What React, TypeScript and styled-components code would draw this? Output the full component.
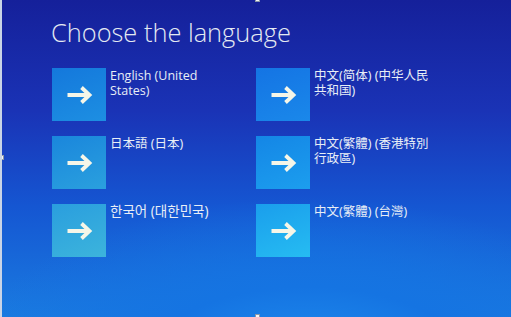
import React from "react";
import styled, { createGlobalStyle } from "styled-components";

const Global = createGlobalStyle`
  html, body { margin: 0; padding: 0; background: #1438b8; }
  #root { width: 511px; height: 317px; }
`;

const Screen = styled.div`
  position: relative;
  width: 511px;
  height: 317px;
  box-sizing: border-box;
  overflow: hidden;
  padding: 15px 0 0 50px;
  border-left: 2px solid #c9d4e6;
  background:
    radial-gradient(ellipse 90% 70% at 60% 115%, #1f8ff0 0%, #1574e2 35%, rgba(21,90,214,0) 75%),
    linear-gradient(180deg, #15209a 0%, #1a33b6 35%, #1556d2 65%, #1a7be0 100%);
  font-family: "Open Sans", "Noto Sans", sans-serif;
  color: #e6ecf4;
`;

const Title = styled.h1`
  margin: 0 0 19px -1px;
  font-family: "Open Sans", "Noto Sans", sans-serif;
  font-weight: 300;
  font-size: 25.4px;
  line-height: 34px;
  color: #e4eaf2;
`;

const Grid = styled.div`
  display: grid;
  grid-template-columns: 204px 204px;
  grid-auto-rows: 54px;
  row-gap: 14px;
`;

const Item = styled.div`
  display: flex;
  align-items: flex-start;
  gap: 4px;
`;

const Tile = styled.div<{ $top: string; $bottom: string }>`
  width: 54px;
  height: 53px;
  flex: none;
  display: flex;
  align-items: center;
  justify-content: center;
  background: linear-gradient(160deg, ${(p) => p.$top}, ${(p) => p.$bottom});
`;

const Label = styled.div<{ $font: string; $size: number }>`
  width: 126px;
  font-family: ${(p) => p.$font};
  font-size: ${(p) => p.$size}px;
  line-height: 15px;
  color: #e8eef6;
`;

const Handle = styled.div<{ $x: number; $y: number }>`
  position: absolute;
  left: ${(p) => p.$x}px;
  top: ${(p) => p.$y}px;
  width: 5px;
  height: 5px;
  background: #f2f4f8;
  border: 1px solid #8a96a8;
  box-sizing: border-box;
`;

const Arrow = () => (
  <svg width="27" height="20" viewBox="0 0 27 20">
    <path
      d="M1.5 10 H23.5 M15.5 2.5 L23.5 10 L15.5 17.5"
      fill="none"
      stroke="#f6f6e8"
      strokeWidth="3.8"
      strokeLinecap="butt"
      strokeLinejoin="miter"
    />
  </svg>
);

const langs = [
  { text: "English (United States)", size: 12.5, font: '"Open Sans", "Noto Sans", sans-serif', top: "#1478dc", bottom: "#1d8fe2" },
  { text: "中文(简体) (中华人民共和国)", size: 12.5, font: '"Noto Sans", "Noto Sans CJK SC", sans-serif', top: "#1474e4", bottom: "#1a88ea" },
  { text: "日本語 (日本)", size: 12.5, font: '"Noto Sans", "Noto Sans CJK JP", sans-serif', top: "#1a86dc", bottom: "#2aa0de" },
  { text: "中文(繁體) (香港特別行政區)", size: 12.5, font: '"Noto Sans", "Noto Sans CJK TC", sans-serif', top: "#1486e6", bottom: "#1c9eee" },
  { text: "한국어 (대한민국)", size: 13.5, font: '"Noto Sans", "Noto Sans CJK KR", sans-serif', top: "#2a9ede", bottom: "#3cb4dc" },
  { text: "中文(繁體) (台灣)", size: 12.5, font: '"Noto Sans", "Noto Sans CJK TC", sans-serif', top: "#1a9eec", bottom: "#26bcf2" },
];

export default function App() {
  return (
    <>
      <Global />
      <Screen>
        <Title>Choose the language</Title>
        <Grid>
          {langs.map((l) => (
            <Item key={l.text}>
              <Tile $top={l.top} $bottom={l.bottom}>
                <Arrow />
              </Tile>
              <Label $font={l.font} $size={l.size}>{l.text}</Label>
            </Item>
          ))}
        </Grid>
        <Handle $x={-3} $y={155} />
        <Handle $x={253} $y={-3} />
        <Handle $x={253} $y={314} />
      </Screen>
    </>
  );
}
